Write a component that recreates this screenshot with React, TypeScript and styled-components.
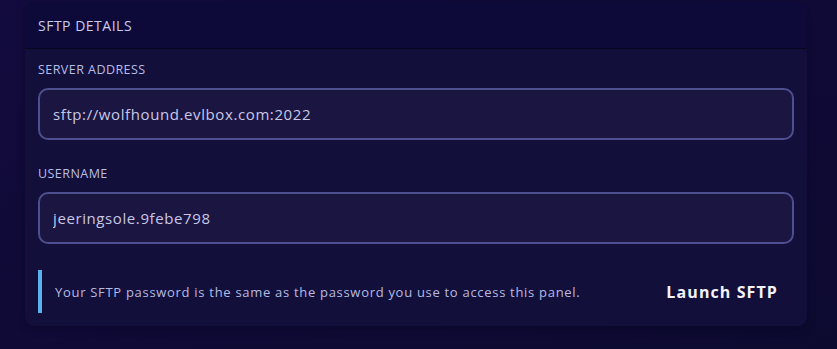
import React from 'react';
import styled, { createGlobalStyle } from 'styled-components';

const GlobalStyle = createGlobalStyle`
  html, body {
    margin: 0;
    padding: 0;
    background: linear-gradient(160deg, #130b3e 0%, #0d0a30 100%);
    min-height: 100vh;
    font-family: 'Open Sans', 'Noto Sans', sans-serif;
  }
`;

const Page = styled.div`
  padding: 2px 30px 0 25px;
  width: 782px;
`;

const Card = styled.section`
  background: #12103a;
  border-radius: 9px;
  overflow: hidden;
  box-shadow: 0 2px 10px rgba(5, 3, 25, 0.35);
`;

const CardHeader = styled.header`
  height: 46px;
  display: flex;
  align-items: center;
  padding: 0 13px;
  background: #0d0a3a;
  border-bottom: 1px solid #07061f;
  color: #c9cbeb;
  font-size: 14px;
  letter-spacing: 0.5px;
`;

const CardBody = styled.div`
  padding: 13px 13px 13px;
  display: flex;
  flex-direction: column;
`;

const Field = styled.div`
  display: flex;
  flex-direction: column;
  margin-bottom: 26px;
`;

const Label = styled.label`
  font-size: 12.5px;
  line-height: 16px;
  color: #b9bde6;
  margin-bottom: 10px;
  letter-spacing: 0.45px;
`;

const Input = styled.input`
  height: 52px;
  box-sizing: border-box;
  border: 2px solid #4e4f8e;
  border-radius: 10px;
  background: #1b1641;
  color: #c8c7e8;
  font-family: inherit;
  font-size: 15px;
  padding: 0 13px;
  outline: none;
  letter-spacing: 0.6px;
`;

const Footer = styled.div`
  display: flex;
  align-items: center;
  justify-content: space-between;
`;

const Notice = styled.p`
  margin: 0;
  height: 43px;
  box-sizing: border-box;
  border-left: 4px solid #5ab3ef;
  padding-left: 13px;
  display: flex;
  align-items: center;
  font-size: 13px;
  color: #b6bae2;
  letter-spacing: 0.7px;
`;

const LaunchButton = styled.button`
  background: none;
  border: none;
  color: #f3f3fb;
  font-family: inherit;
  font-size: 16px;
  font-weight: 700;
  letter-spacing: 1.1px;
  padding: 8px 16px;
  cursor: pointer;
`;

const App: React.FC = () => (
  <>
    <GlobalStyle />
    <Page>
      <Card>
        <CardHeader>SFTP DETAILS</CardHeader>
        <CardBody>
          <Field>
            <Label>SERVER ADDRESS</Label>
            <Input readOnly value="sftp://wolfhound.evlbox.com:2022" />
          </Field>
          <Field>
            <Label>USERNAME</Label>
            <Input readOnly value="jeeringsole.9febe798" />
          </Field>
          <Footer>
            <Notice>Your SFTP password is the same as the password you use to access this panel.</Notice>
            <LaunchButton>Launch SFTP</LaunchButton>
          </Footer>
        </CardBody>
      </Card>
    </Page>
  </>
);

export default App;
